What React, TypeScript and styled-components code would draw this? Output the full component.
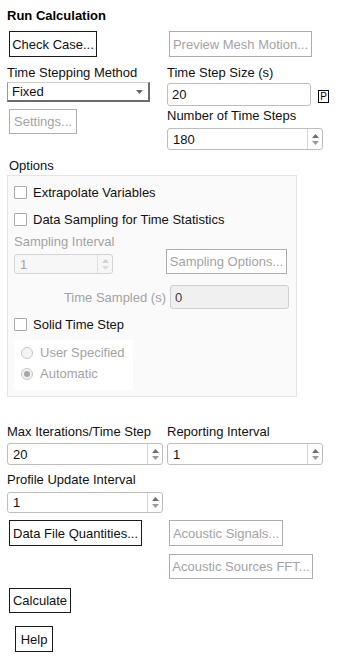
import React from "react";
import styled, { createGlobalStyle } from "styled-components";

const Global = createGlobalStyle`
  html, body { margin: 0; padding: 0; background: #ffffff; }
  body {
    font-family: "Liberation Sans", Arial, sans-serif;
    font-size: 13px;
    color: #000;
  }
`;

const Page = styled.div`
  width: 362px;
  height: 669px;
  box-sizing: border-box;
  padding: 8px 0 0 7px;
  display: flex;
  flex-direction: column;
  align-items: flex-start;
`;

const Title = styled.div`
  font-weight: bold;
  line-height: 15px;
  height: 15px;
`;

const Row = styled.div<{ $mt: number }>`
  display: flex;
  align-items: flex-start;
  margin-top: ${(p) => p.$mt}px;
`;

const Columns = styled.div<{ $mt: number }>`
  display: grid;
  grid-template-columns: 160px 160px;
  align-items: start;
  margin-top: ${(p) => p.$mt}px;
`;

const Col = styled.div`
  display: flex;
  flex-direction: column;
  align-items: flex-start;
`;

const Label = styled.div<{ $mt?: number; $ml?: number; $disabled?: boolean }>`
  line-height: 15px;
  height: 15px;
  white-space: nowrap;
  margin-top: ${(p) => p.$mt ?? 0}px;
  margin-left: ${(p) => p.$ml ?? 0}px;
  color: ${(p) => (p.$disabled ? "#a3a3a3" : "#111")};
`;

const Button = styled.button<{ $w: number; $h?: number; $mt?: number; $ml?: number }>`
  box-sizing: border-box;
  width: ${(p) => p.$w}px;
  height: ${(p) => p.$h ?? 26}px;
  margin-top: ${(p) => p.$mt ?? 0}px;
  margin-left: ${(p) => p.$ml ?? 2}px;
  padding: 0;
  background: #fff;
  border: 1px solid #1a1a1a;
  border-radius: 0;
  font-family: inherit;
  font-size: 13px;
  color: #111;
  white-space: nowrap;
  text-align: center;
  &:disabled {
    border-color: #adadad;
    color: #a3a3a3;
  }
`;

const Select = styled.div`
  box-sizing: border-box;
  width: 143px;
  height: 20px;
  margin-top: 2px;
  border-style: solid;
  border-width: 1px 2px 2px 1px;
  border-color: #cfcfcf #6c6c6c #6c6c6c #9a9a9a;
  background: #fff;
  display: flex;
  align-items: center;
  justify-content: space-between;
  padding: 0 5px 0 4px;
  line-height: 15px;
  color: #111;
`;

const TextBox = styled.div<{ $w: number; $h: number; $mt?: number; $disabled?: boolean }>`
  box-sizing: border-box;
  width: ${(p) => p.$w}px;
  height: ${(p) => p.$h}px;
  margin-top: ${(p) => p.$mt ?? 0}px;
  border: 1px solid ${(p) => (p.$disabled ? "#cfcfcf" : "#bdbdbd")};
  border-radius: 3px;
  background: ${(p) => (p.$disabled ? "#f0f0f0" : "#fff")};
  display: flex;
  align-items: center;
  padding-left: 4px;
  color: ${(p) => (p.$disabled ? "#3c3c3c" : "#111")};
  line-height: 15px;
`;

const InputLine = styled.div`
  display: flex;
  align-items: center;
  margin-top: 3px;
  gap: 7px;
`;

const PBox = styled.div`
  box-sizing: border-box;
  width: 11px;
  height: 13px;
  margin-top: 3px;
  border: 1px solid #000;
  font-size: 10px;
  line-height: 11px;
  text-align: center;
`;

const SpinBox = styled.div<{ $w: number; $h: number; $mt?: number; $disabled?: boolean }>`
  box-sizing: border-box;
  width: ${(p) => p.$w}px;
  height: ${(p) => p.$h}px;
  margin-top: ${(p) => p.$mt ?? 0}px;
  border: 1px solid ${(p) => (p.$disabled ? "#d3d3d3" : "#bdbdbd")};
  border-radius: 3px;
  background: ${(p) => (p.$disabled ? "#f7f7f7" : "#fff")};
  display: flex;
  align-items: stretch;
  color: ${(p) => (p.$disabled ? "#a3a3a3" : "#111")};
`;

const SpinValue = styled.div`
  flex: 1;
  display: flex;
  align-items: center;
  padding-left: 5px;
  line-height: 15px;
`;

const SpinArrows = styled.div<{ $disabled?: boolean }>`
  width: 14px;
  border-left: 1px solid ${(p) => (p.$disabled ? "#e2e2e2" : "#d6d6d6")};
  display: flex;
  flex-direction: column;
  align-items: center;
  justify-content: center;
  gap: 3px;
`;

const Group = styled.div`
  box-sizing: border-box;
  width: 290px;
  height: 222px;
  margin-top: 2px;
  border: 1px solid #e4e4e4;
  background: #fafafa;
  padding: 9px 0 0 6px;
  display: flex;
  flex-direction: column;
  align-items: flex-start;
`;

const CheckRow = styled.div<{ $mt?: number }>`
  display: flex;
  align-items: center;
  height: 15px;
  gap: 6px;
  margin-top: ${(p) => p.$mt ?? 0}px;
  white-space: nowrap;
  color: #111;
`;

const CheckBox = styled.span`
  box-sizing: border-box;
  width: 13px;
  height: 13px;
  border: 1px solid #a9a9a9;
  border-radius: 1px;
  background: #fff;
`;

const SamplingGrid = styled.div`
  display: grid;
  grid-template-columns: 152px 121px;
  align-items: end;
  margin-top: 7px;
`;

const TimeSampledRow = styled.div`
  display: flex;
  align-items: center;
  justify-content: flex-end;
  gap: 4px;
  width: 275px;
  margin-top: 11px;
`;

const RadioBox = styled.div`
  box-sizing: border-box;
  width: 119px;
  height: 50px;
  margin-top: 8px;
  background: #ffffff;
  padding: 5px 0 0 7px;
  display: flex;
  flex-direction: column;
  gap: 6px;
`;

const RadioRow = styled.div`
  display: flex;
  align-items: center;
  height: 15px;
  gap: 7px;
  color: #a3a3a3;
  white-space: nowrap;
`;

const RadioCircle = styled.span<{ $checked?: boolean }>`
  box-sizing: border-box;
  width: 12px;
  height: 12px;
  border-radius: 50%;
  border: 1px solid #c6c6c6;
  background: #f4f4f4;
  display: flex;
  align-items: center;
  justify-content: center;
  &::after {
    content: "";
    width: 6px;
    height: 6px;
    border-radius: 50%;
    background: ${(p) => (p.$checked ? "#a6a6a6" : "transparent")};
  }
`;

const Arrow = ({ up, color }: { up?: boolean; color: string }) => (
  <svg width="7" height="4" viewBox="0 0 7 4">
    <path d={up ? "M0 4 L3.5 0 L7 4 Z" : "M0 0 L3.5 4 L7 0 Z"} fill={color} />
  </svg>
);

const Spinner = ({
  value,
  w,
  h,
  mt,
  disabled,
}: {
  value: string;
  w: number;
  h: number;
  mt?: number;
  disabled?: boolean;
}) => (
  <SpinBox $w={w} $h={h} $mt={mt} $disabled={disabled}>
    <SpinValue>{value}</SpinValue>
    <SpinArrows $disabled={disabled}>
      <Arrow up color={disabled ? "#d0d0d0" : "#6e6e6e"} />
      <Arrow color={disabled ? "#dcdcdc" : "#9a9a9a"} />
    </SpinArrows>
  </SpinBox>
);

export default function App() {
  return (
    <>
      <Global />
      <Page>
        <Title>Run Calculation</Title>
        <Columns $mt={8}>
          <Col>
            <Button $w={88}>Check Case...</Button>
          </Col>
          <Col>
            <Button $w={143} disabled>
              Preview Mesh Motion...
            </Button>
          </Col>
        </Columns>

        <Columns $mt={8}>
          <Col>
            <Label>Time Stepping Method</Label>
            <Select>
              <span>Fixed</span>
              <svg width="7" height="4" viewBox="0 0 7 4">
                <path d="M0 0 L3.5 4 L7 0 Z" fill="#666" />
              </svg>
            </Select>
            <Button $w={68} $h={25} $mt={7} disabled>
              Settings...
            </Button>
          </Col>
          <Col>
            <Label>Time Step Size (s)</Label>
            <InputLine>
              <TextBox $w={144} $h={23}>
                20
              </TextBox>
              <PBox>P</PBox>
            </InputLine>
            <Label $mt={2}>Number of Time Steps</Label>
            <Spinner value="180" w={156} h={22} mt={5} />
          </Col>
        </Columns>

        <Label $mt={8} $ml={2}>
          Options
        </Label>
        <Group>
          <CheckRow>
            <CheckBox />
            Extrapolate Variables
          </CheckRow>
          <CheckRow $mt={12}>
            <CheckBox />
            Data Sampling for Time Statistics
          </CheckRow>
          <SamplingGrid>
            <Col>
              <Label $disabled>Sampling Interval</Label>
              <Spinner value="1" w={99} h={20} mt={5} disabled />
            </Col>
            <Button $w={121} $h={25} $ml={0} disabled>
              Sampling Options...
            </Button>
          </SamplingGrid>
          <TimeSampledRow>
            <Label $disabled>Time Sampled (s)</Label>
            <TextBox $w={119} $h={24} $disabled>
              0
            </TextBox>
          </TimeSampledRow>
          <CheckRow $mt={8}>
            <CheckBox />
            Solid Time Step
          </CheckRow>
          <RadioBox>
            <RadioRow>
              <RadioCircle />
              User Specified
            </RadioRow>
            <RadioRow>
              <RadioCircle $checked />
              Automatic
            </RadioRow>
          </RadioBox>
        </Group>

        <Columns $mt={27}>
          <Col>
            <Label>Max Iterations/Time Step</Label>
            <Spinner value="20" w={156} h={22} mt={4} />
          </Col>
          <Col>
            <Label>Reporting Interval</Label>
            <Spinner value="1" w={156} h={22} mt={4} />
          </Col>
        </Columns>

        <Label $mt={7}>Profile Update Interval</Label>
        <Spinner value="1" w={156} h={21} mt={5} />

        <Columns $mt={7}>
          <Col>
            <Button $w={133}>Data File Quantities...</Button>
          </Col>
          <Col>
            <Button $w={114} disabled>
              Acoustic Signals...
            </Button>
            <Button $w={144} $h={25} $mt={8} disabled>
              Acoustic Sources FFT...
            </Button>
          </Col>
        </Columns>

        <Row $mt={9}>
          <Button $w={62} $h={25}>
            Calculate
          </Button>
        </Row>
        <Row $mt={13}>
          <Button $w={38} $ml={8}>
            Help
          </Button>
        </Row>
      </Page>
    </>
  );
}
